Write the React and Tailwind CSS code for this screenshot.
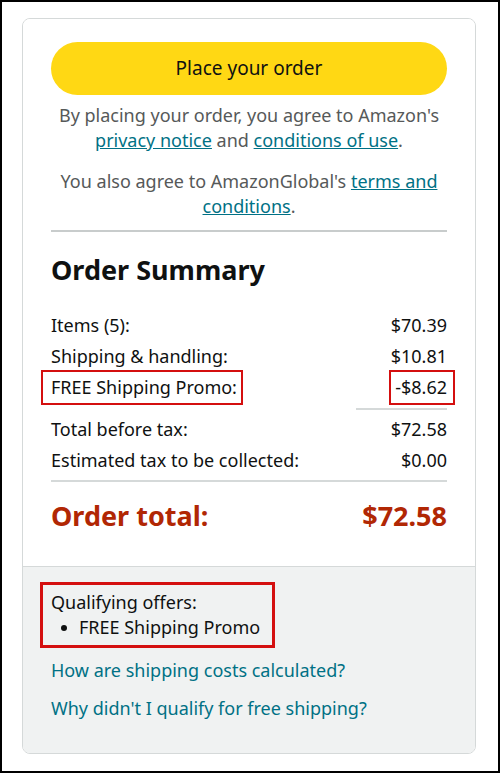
import React from "react";

const Row = ({ label, value, boxed }) => (
    <div className="flex items-center justify-between h-[31px]">
        <span className={boxed ? "relative" : ""}>
            {boxed && <span className="absolute -left-[10px] -right-[6px] -top-[4px] -bottom-[4px] border-2 border-[#d40f0f]" />}
            {label}
        </span>
        <span className={boxed ? "relative" : ""}>
            {boxed && <span className="absolute -left-[6px] -right-[8px] -top-[4px] -bottom-[4px] border-2 border-[#d40f0f]" />}
            {value}
        </span>
    </div>
);

const App = () => {
    return (
        <div
            className="w-[500px] h-[773px] border-2 border-black bg-white pt-[16px] pl-[20px]"
            style={{ fontFamily: '"Noto Sans", Arial, sans-serif' }}
        >
            <div className="w-[454px] border border-[#d5d9d9] rounded-[8px] overflow-hidden">
                {/* Top section */}
                <div className="px-[28px] pt-[23px] pb-[33px] bg-white">
                    <button className="w-full h-[53px] rounded-full bg-[#ffd814] text-[19px] text-[#0f1111]">
                        Place your order
                    </button>

                    <p className="mt-[8px] text-center text-[18px] leading-[25px] text-[#565959]">
                        By placing your order, you agree to Amazon's{" "}
                        <a className="text-[#007185] underline">privacy notice</a> and{" "}
                        <a className="text-[#007185] underline">conditions of use</a>.
                    </p>
                    <p className="mt-[16px] text-center text-[18px] leading-[25px] text-[#565959] px-[4px]">
                        You also agree to AmazonGlobal's{" "}
                        <a className="text-[#007185] underline">terms and conditions</a>.
                    </p>

                    <div className="mt-[11px] border-t-2 border-[#c8cccc]" />

                    <h2 className="mt-[21px] text-[27px] leading-[34px] font-bold text-[#0f1111]">Order Summary</h2>

                    <div className="mt-[23px] text-[18px] text-[#0f1111]">
                        <Row label="Items (5):" value="$70.39" />
                        <Row label="Shipping & handling:" value="$10.81" />
                        <Row label="FREE Shipping Promo:" value="-$8.62" boxed />
                        <div className="flex justify-end mt-[5px] mb-[4px]">
                            <div className="w-[91px] border-t-2 border-[#d5d9d9]" />
                        </div>
                        <Row label="Total before tax:" value="$72.58" />
                        <Row label="Estimated tax to be collected:" value="$0.00" />
                    </div>

                    <div className="mt-[4px] border-t-2 border-[#d5d9d9]" />

                    <div className="mt-[17px] flex items-center justify-between text-[27px] leading-[34px] font-bold text-[#b12704]">
                        <span>Order total:</span>
                        <span>$72.58</span>
                    </div>
                </div>

                {/* Bottom section */}
                <div className="border-t border-[#d5d9d9] bg-[#f0f2f2] px-[28px] pt-[15px] pb-[32px]">
                    <div className="inline-block border-[3px] border-[#d40f0f] pl-[8px] pr-[12px] py-[5px] -ml-[11px] text-[18px] leading-[25px] text-[#0f1111]">
                        <div>Qualifying offers:</div>
                        <div className="flex items-center">
                            <span className="ml-[10px] mr-[12px] w-[6px] h-[6px] rounded-full bg-[#0f1111]" />
                            FREE Shipping Promo
                        </div>
                    </div>
                    <div className="mt-[10px] text-[18px] leading-[25px] text-[#007185]">How are shipping costs calculated?</div>
                    <div className="mt-[13px] text-[18px] leading-[25px] text-[#007185]">Why didn't I qualify for free shipping?</div>
                </div>
            </div>
        </div>
    );
};

export default App;
